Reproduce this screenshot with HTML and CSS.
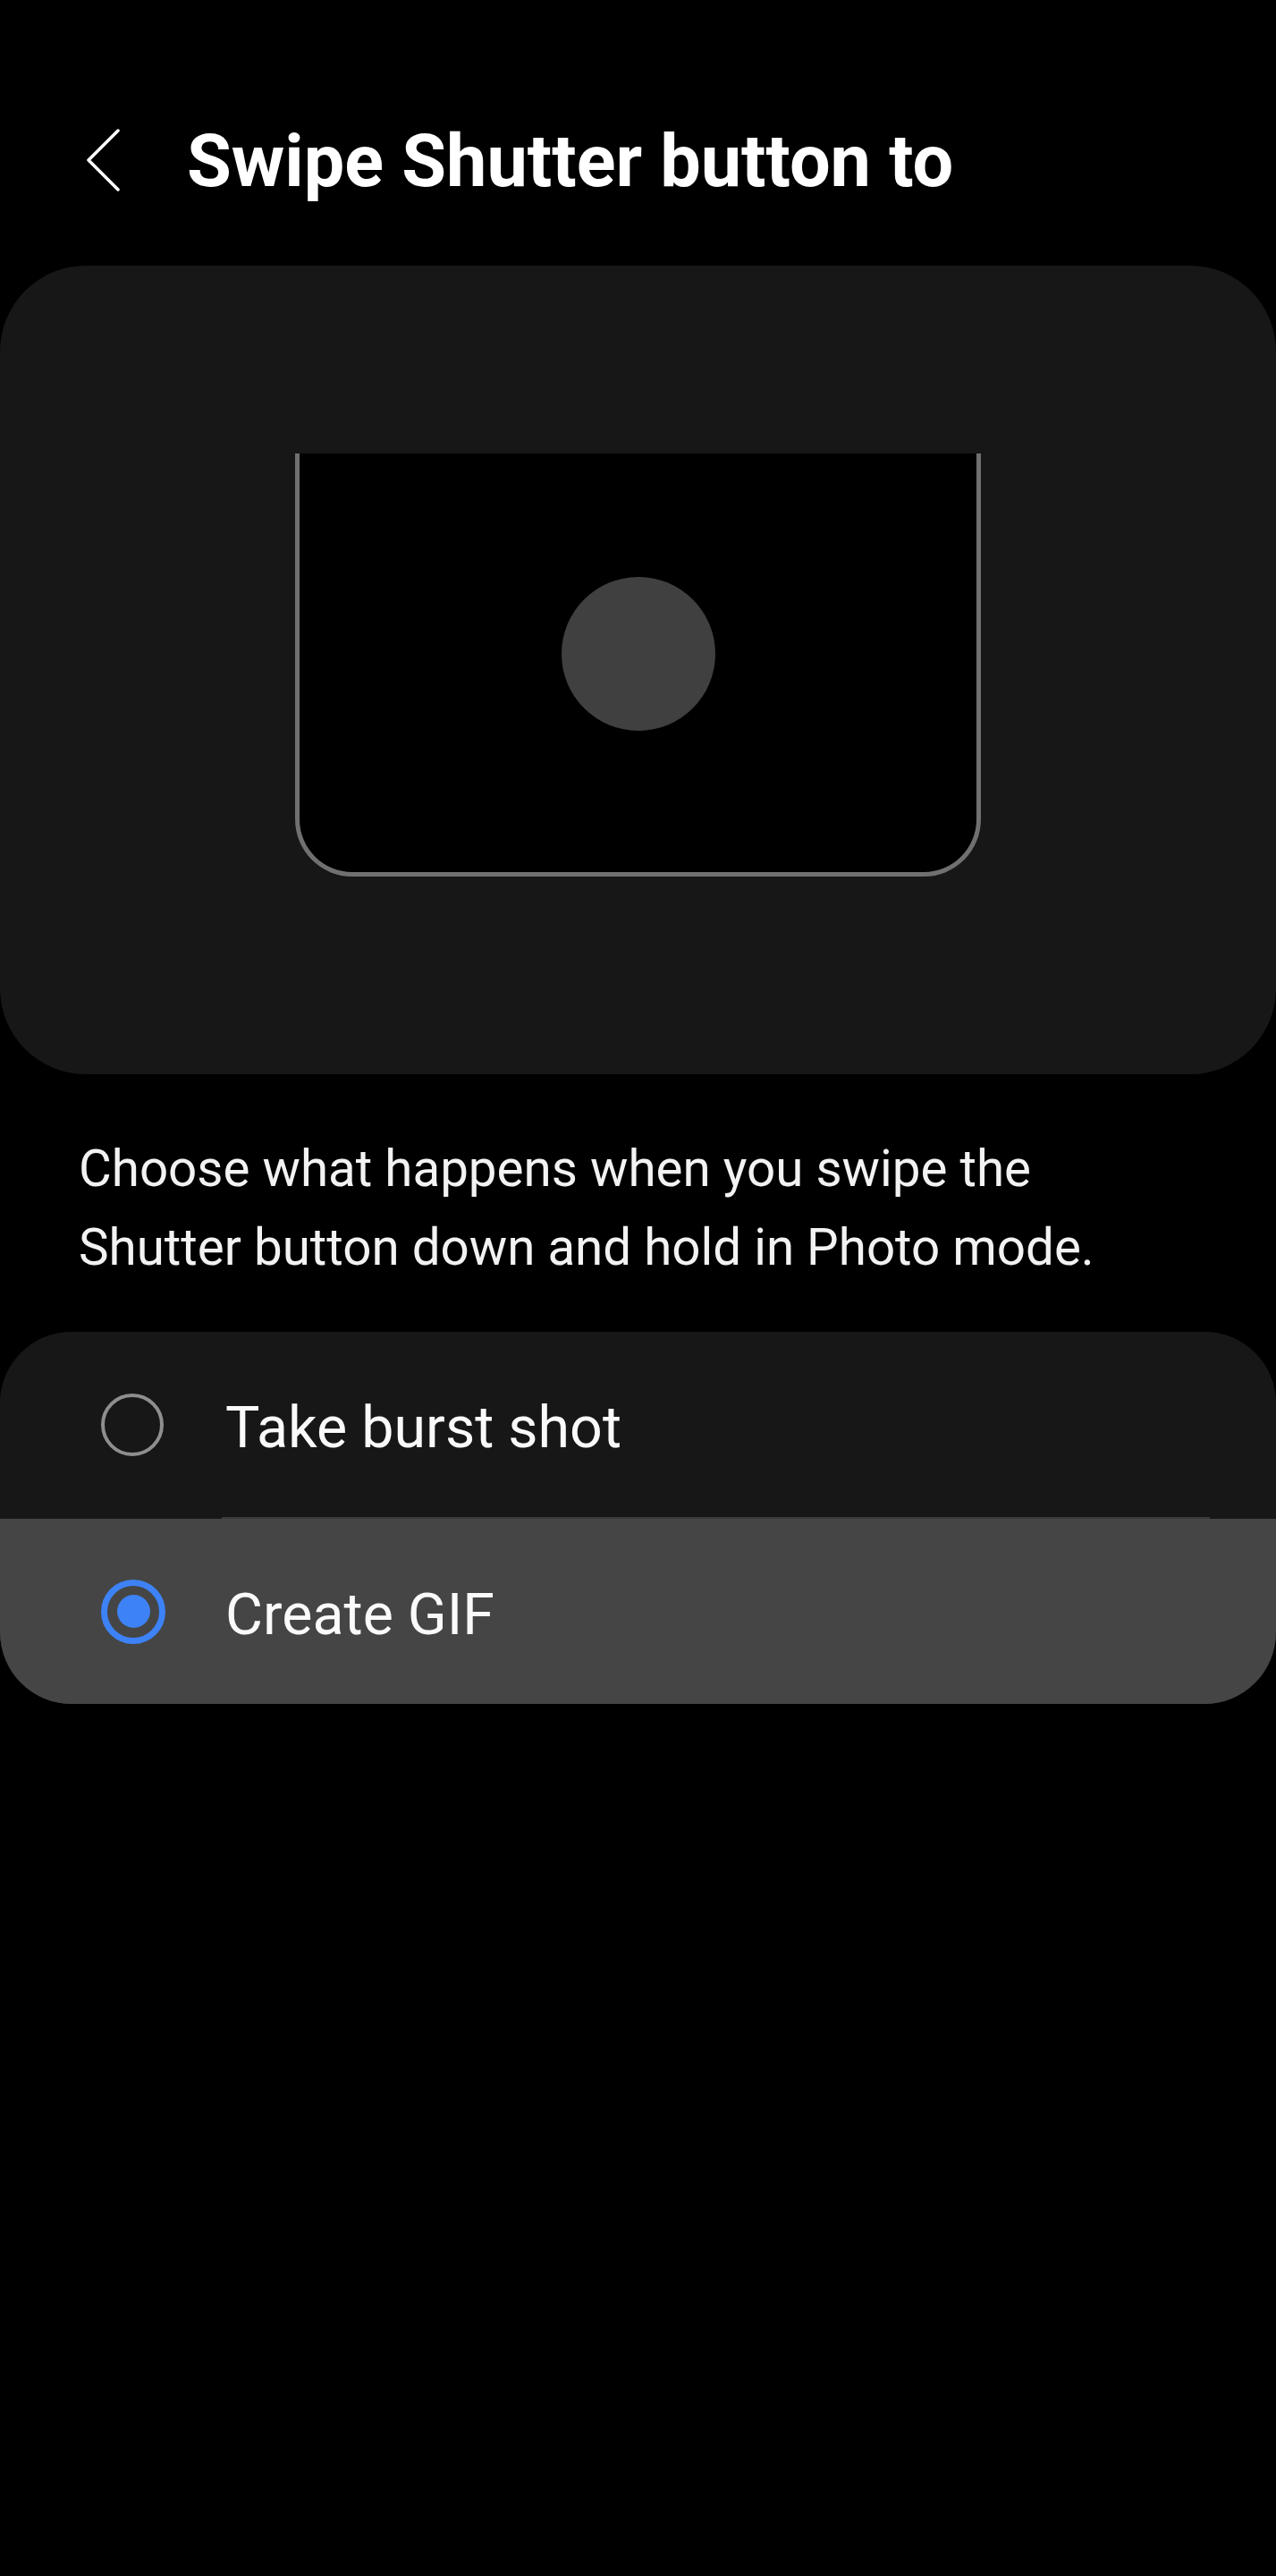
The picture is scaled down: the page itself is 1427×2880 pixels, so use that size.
FILE: index.html
```html
<!DOCTYPE html>
<html lang="en">
<head>
<meta charset="utf-8">
<title>Swipe Shutter button to</title>
<link rel="stylesheet" href="styles.css">
</head>
<body>
<div class="screen">
  <header class="header">
    <button class="back" aria-label="Back">
      <svg width="40" height="70" viewBox="0 0 40 70"><polyline points="36,2 3,35 36,68" fill="none" stroke="#ffffff" stroke-width="3.5" stroke-linecap="round" stroke-linejoin="round"/></svg>
    </button>
    <h1 class="title">Swipe Shutter button to</h1>
  </header>

  <section class="illustration">
    <div class="frame">
      <div class="shutter"></div>
    </div>
  </section>

  <p class="desc">Choose what happens when you swipe the<br>Shutter button down and hold in Photo mode.</p>

  <div class="options">
    <div class="option">
      <span class="radio"></span>
      <span class="label">Take burst shot</span>
    </div>
    <div class="divider"></div>
    <div class="option option-selected">
      <span class="radio radio-on"><span class="dot"></span></span>
      <span class="label">Create GIF</span>
    </div>
  </div>
</div>
</body>
</html>
```
FILE: styles.css
```css
html, body {
  margin: 0;
  padding: 0;
  background: #000000;
}
.screen {
  width: 1427px;
  min-height: 2880px;
  background: #000000;
  color: #fafafa;
  font-family: Roboto, "Noto Sans", "Liberation Sans", sans-serif;
}
.header {
  display: flex;
  align-items: center;
  height: 120px;
  padding-top: 119px;
  padding-left: 96px;
  box-sizing: content-box;
}
.back {
  background: none;
  border: none;
  padding: 0;
  margin: 0;
  width: 40px;
  height: 70px;
  display: flex;
}
.title {
  margin: 2px 0 0 73px;
  font-size: 81px;
  font-weight: 700;
  color: #ffffff;
  line-height: 1;
}
.illustration {
  margin-top: 58px;
  height: 904px;
  background: #171717;
  border-radius: 96px;
  display: flex;
  justify-content: center;
  align-items: flex-start;
  padding-top: 210px;
  box-sizing: border-box;
}
.frame {
  width: 767px;
  height: 473px;
  box-sizing: border-box;
  background: #000000;
  border: 5px solid #707070;
  border-top: none;
  border-radius: 0 0 64px 64px;
  display: flex;
  justify-content: center;
  padding-top: 138px;
}
.shutter {
  width: 172px;
  height: 172px;
  border-radius: 50%;
  background: #404040;
}
.desc {
  margin: 62px 0 0 0;
  padding-left: 88px;
  font-size: 56.5px;
  line-height: 88px;
  color: #f2f2f2;
}
.options {
  margin-top: 50px;
  border-radius: 80px;
  overflow: hidden;
  background: #171717;
}
.option {
  display: flex;
  align-items: center;
  height: 207px;
  padding-left: 113px;
  background: #171717;
}
.option-selected {
  background: #454545;
}
.divider {
  height: 2px;
  margin: 0 74px 0 248px;
  background: #3a3a3a;
}
.radio {
  width: 70px;
  height: 70px;
  box-sizing: border-box;
  border-radius: 50%;
  border: 4px solid #8e8e8e;
  flex: none;
  display: flex;
  align-items: center;
  justify-content: center;
}
.radio-on {
  width: 72px;
  height: 72px;
  border: 7px solid #3d82f6;
}
.dot {
  width: 37px;
  height: 37px;
  border-radius: 50%;
  background: #3d82f6;
}
.label {
  margin-left: 69px;
  padding-top: 6px;
  font-size: 64.5px;
  color: #fafafa;
}
.option-selected .label {
  margin-left: 67px;
}
```
